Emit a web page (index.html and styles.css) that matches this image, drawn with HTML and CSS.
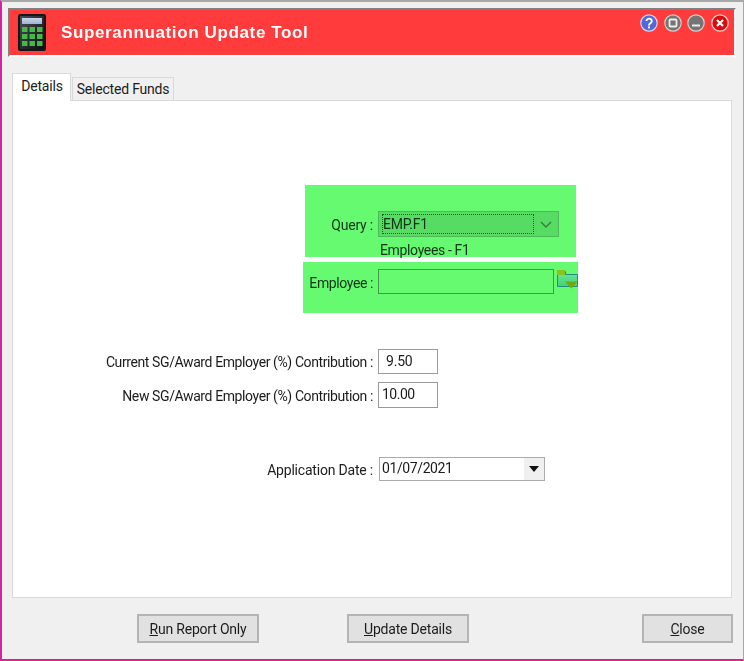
FILE: index.html
```html
<!DOCTYPE html>
<html lang="en">
<head>
<meta charset="utf-8">
<title>Superannuation Update Tool</title>
<link rel="stylesheet" href="styles.css">
</head>
<body>
<div class="window">
  <header class="banner">
    <svg class="app-icon" width="28" height="37" viewBox="0 0 28 37" aria-hidden="true">
      <defs>
        <linearGradient id="body" x1="0" y1="0" x2="1" y2="1"><stop offset="0" stop-color="#4a4f52"/><stop offset="1" stop-color="#0c0d0e"/></linearGradient>
        <linearGradient id="lcd" x1="0" y1="0" x2="0" y2="1"><stop offset="0" stop-color="#c9d6ec"/><stop offset="1" stop-color="#9db4d4"/></linearGradient>
      </defs>
      <rect x="0" y="0" width="28" height="37" rx="2" fill="#141617"/>
      <rect x="2" y="2" width="24" height="33" rx="1" fill="url(#body)"/>
      <rect x="4" y="4" width="20" height="6" fill="url(#lcd)"/>
      <g fill="#45b84a">
        <rect x="4" y="13" width="5.5" height="5"/><rect x="11.5" y="13" width="5.5" height="5"/><rect x="19" y="13" width="5.5" height="5"/>
        <rect x="4" y="20" width="5.5" height="5"/><rect x="11.5" y="20" width="5.5" height="5"/><rect x="19" y="20" width="5.5" height="5"/>
        <rect x="4" y="27" width="5.5" height="5"/><rect x="11.5" y="27" width="5.5" height="5"/><rect x="19" y="27" width="5.5" height="5"/>
      </g>
    </svg>
    <h1 class="title">Superannuation Update Tool</h1>
    <div class="window-buttons">
      <svg class="wb" width="18" height="18" viewBox="0 0 18 18" aria-hidden="true">
        <circle cx="9" cy="9" r="8.2" fill="#5068dc" stroke="#d9d9f0" stroke-width="1.2"/>
        <path d="M6.4 7a2.7 2.4 0 1 1 4.3 2c-1.100.8-1.700 1.200-1.700 2.400" fill="none" stroke="#fff" stroke-width="1.900"/>
        <rect x="8" y="12.400" width="2" height="2" fill="#fff"/>
      </svg>
      <svg class="wb" width="18" height="18" viewBox="0 0 18 18" aria-hidden="true">
        <circle cx="9" cy="9" r="8.2" fill="#757575" stroke="#d8d0d0" stroke-width="1.2"/>
        <rect x="5.500" y="5.500" width="7" height="7" rx="1" fill="none" stroke="#eee" stroke-width="1.800"/>
      </svg>
      <svg class="wb" width="18" height="18" viewBox="0 0 18 18" aria-hidden="true">
        <circle cx="9" cy="9" r="8.2" fill="#757575" stroke="#d8d0d0" stroke-width="1.2"/>
        <rect x="5" y="10.500" width="8" height="2" fill="#eee"/>
      </svg>
      <svg class="wb" width="18" height="18" viewBox="0 0 18 18" aria-hidden="true">
        <circle cx="9" cy="9" r="8.2" fill="#d80d0d" stroke="#f3d0d0" stroke-width="1.2"/>
        <path d="M6 6l6 6M12 6l-6 6" stroke="#fff" stroke-width="2.2"/>
      </svg>
    </div>
  </header>

  <nav class="tabs">
    <span class="tab tab-active">Details</span>
    <span class="tab">Selected Funds</span>
  </nav>

  <main class="panel">
    <section class="highlight query-group">
      <div class="row">
        <label class="label query-label">Query :</label>
        <div class="combo"><span class="combo-focus">EMP.F1</span>
          <svg width="12" height="7" viewBox="0 0 12 7" class="chev" aria-hidden="true"><path d="M1 1l5 5 5-5" fill="none" stroke="#3a7a45" stroke-width="1.4"/></svg>
        </div>
      </div>
      <div class="query-desc">Employees - F1</div>
    </section>

    <section class="highlight employee-group">
      <label class="label employee-label">Employee :</label>
      <div class="emp-input"></div>
      <svg class="folder" width="21" height="20" viewBox="0 0 21 20" aria-hidden="true">
        <defs><linearGradient id="fold" x1="0" y1="0" x2="0" y2="1"><stop offset="0" stop-color="#6fe7a0"/><stop offset="1" stop-color="#45d070"/></linearGradient></defs>
        <path d="M.5 1.500h8v3h12v12H.5z" fill="url(#fold)" stroke="#1f8f80"/>
        <rect x="0" y="0" width="8" height="5" fill="#8fc21f"/>
        <path d="M8 11.500h12.500l-6.250 7z" fill="#6fa80f"/>
      </svg>
    </section>

    <section class="contrib">
      <div class="field-row">
        <label class="label wide-label tight">Current SG/Award Employer (%) Contribution :</label>
        <div class="num-input indent">9.50</div>
      </div>
      <div class="field-row">
        <label class="label wide-label tight">New SG/Award Employer (%) Contribution :</label>
        <div class="num-input tight-value">10.00</div>
      </div>
    </section>

    <section class="field-row date-row">
      <label class="label wide-label date-label">Application Date :</label>
      <div class="date-input"><span class="date-value">01/07/2021</span>
        <span class="date-arrow"><svg width="10" height="6" viewBox="0 0 10 6" aria-hidden="true"><path d="M0 0h10L5 6z" fill="#111"/></svg></span>
      </div>
    </section>
  </main>

  <footer class="actions">
    <button class="btn btn-run"><u>R</u>un Report Only</button>
    <button class="btn btn-update"><u>U</u>pdate Details</button>
    <button class="btn btn-close"><u>C</u>lose</button>
  </footer>
</div>
</body>
</html>
```
FILE: styles.css
```css
* { box-sizing: border-box; }
html, body { margin: 0; padding: 0; }
body {
  width: 744px;
  height: 661px;
  overflow: hidden;
  background: #f0f0f0;
  font-family: Roboto, "Liberation Sans", Arial, sans-serif;
  font-size: 14px;
  letter-spacing: -0.2px;
  color: #1c1c1c;
}
.window {
  width: 744px;
  height: 661px;
  padding: 6px 7px 0 6px;
  border-top: 2px solid #a8a8a8;
  border-left: 2px solid #d6249f;
  border-right: 1px solid #a8a8a8;
  border-bottom: 2px solid #e61e96;
  filter: blur(0.3px);
}
.banner {
  display: flex;
  align-items: center;
  width: 728px;
  height: 49px;
  padding: 0 0 0 8px;
  background: #ff3b3b;
  border-top: 2px solid #808080;
  border-left: 2px solid #808080;
  border-right: 2px solid #f4f4f4;
  border-bottom: 2px solid #fff;
}
.app-icon { flex: none; }
.title {
  margin: 0 0 0 15px;
  font-family: "Liberation Sans", Arial, sans-serif;
  font-size: 17px;
  font-weight: 700;
  letter-spacing: 0.63px;
  color: #fff;
}
.window-buttons {
  display: flex;
  gap: 5.67px;
  margin: -20px 5px 0 auto;
}
.wb { flex: none; }
.tabs {
  display: flex;
  align-items: flex-end;
  height: 44px;
  margin-left: 4px;
  margin-right: 4px;
  margin-bottom: -1px;
  position: relative;
}
.tab {
  display: block;
  height: 24px;
  padding: 3px 0 0;
  width: 102px;
  margin-left: 1px;
  text-align: center;
  background: #f0f0f0;
  border: 1px solid #d9d9d9;
}
.tab-active {
  width: 59px;
  height: 28px;
  margin-left: 0;
  padding-top: 4px;
  padding-left: 1px;
  background: #fff;
  border-bottom: 0;
  position: relative;
  z-index: 1;
}
.panel {
  width: 720px;
  height: 498px;
  margin-left: 4px;
  padding: 84px 0 0;
  background: #fff;
  border: 1px solid #d9d9d9;
}
.highlight { background: #66fa71; color: #10331a; }
.query-group {
  width: 271px;
  height: 72px;
  margin-left: 292px;
  padding-top: 26px;
}
.row { display: flex; align-items: center; }
.label { white-space: nowrap; text-align: right; flex: none; }
.query-label { width: 68px; margin-top: 2px; }
.combo {
  display: flex;
  align-items: center;
  width: 181px;
  height: 26px;
  margin-left: 5px;
  padding: 2px 6px 2px 3px;
  background: #57dc63;
  border: 1px solid #4db95a;
}
.combo-focus {
  flex: 1;
  height: 20px;
  line-height: 18px;
  padding-left: 0;
  border: 1px dotted #1f5a2a;
  margin-right: 6px;
}
.chev { flex: none; }
.query-desc { margin: 5px 0 0 75px; line-height: 16px; letter-spacing: -0.35px; }
.employee-group {
  display: flex;
  align-items: flex-start;
  width: 275px;
  height: 51px;
  margin: 5px 0 0 290px;
  padding-top: 7px;
}
.employee-label { width: 70px; line-height: 25px; margin-top: 2px; letter-spacing: -0.4px; }
.emp-input {
  width: 176px;
  height: 25px;
  margin-left: 5px;
  border: 1px solid #3f9a4c;
}
.folder { flex: none; margin: 1px 0 0 3px; }
.contrib { margin-top: 36px; display: flex; flex-direction: column; gap: 8px; }
.field-row { display: flex; align-items: center; }
.wide-label { width: 360px; }
.tight { letter-spacing: -0.4px; }
.num-input {
  width: 60px;
  height: 25px;
  margin-left: 5px;
  padding-left: 4px;
  line-height: 23px;
  border: 1px solid #9a9a9a;
}
.contrib .field-row + .field-row .num-input { height: 26px; }
.contrib .field-row + .field-row .label { margin-top: 2px; }
.indent { padding-left: 7px; }
.tight-value { padding-left: 3px; letter-spacing: -0.5px; }
.date-row { margin-top: 49px; }
.date-label { margin-top: 2px; }
.date-input {
  display: flex;
  width: 166px;
  height: 24px;
  margin-left: 6px;
  border: 1px solid #ababab;
}
.date-value { flex: 1; padding-left: 2px; line-height: 21px; letter-spacing: -0.4px; }
.date-arrow {
  display: flex;
  align-items: center;
  justify-content: center;
  width: 20px;
  background: #f0f0f0;
}
.actions {
  display: flex;
  align-items: flex-start;
  padding: 16px 0 0 129px;
}
.btn {
  height: 29px;
  padding: 1px 0 0;
  font: inherit;
  letter-spacing: -0.2px;
  color: #1c1c1c;
  background: #e1e1e1;
  border: 2px solid #b4b4b4;
}
.btn-run { width: 122px; }
.btn-update { width: 122px; margin-left: 88px; }
.btn-close { width: 91px; margin-left: 173px; }
```
